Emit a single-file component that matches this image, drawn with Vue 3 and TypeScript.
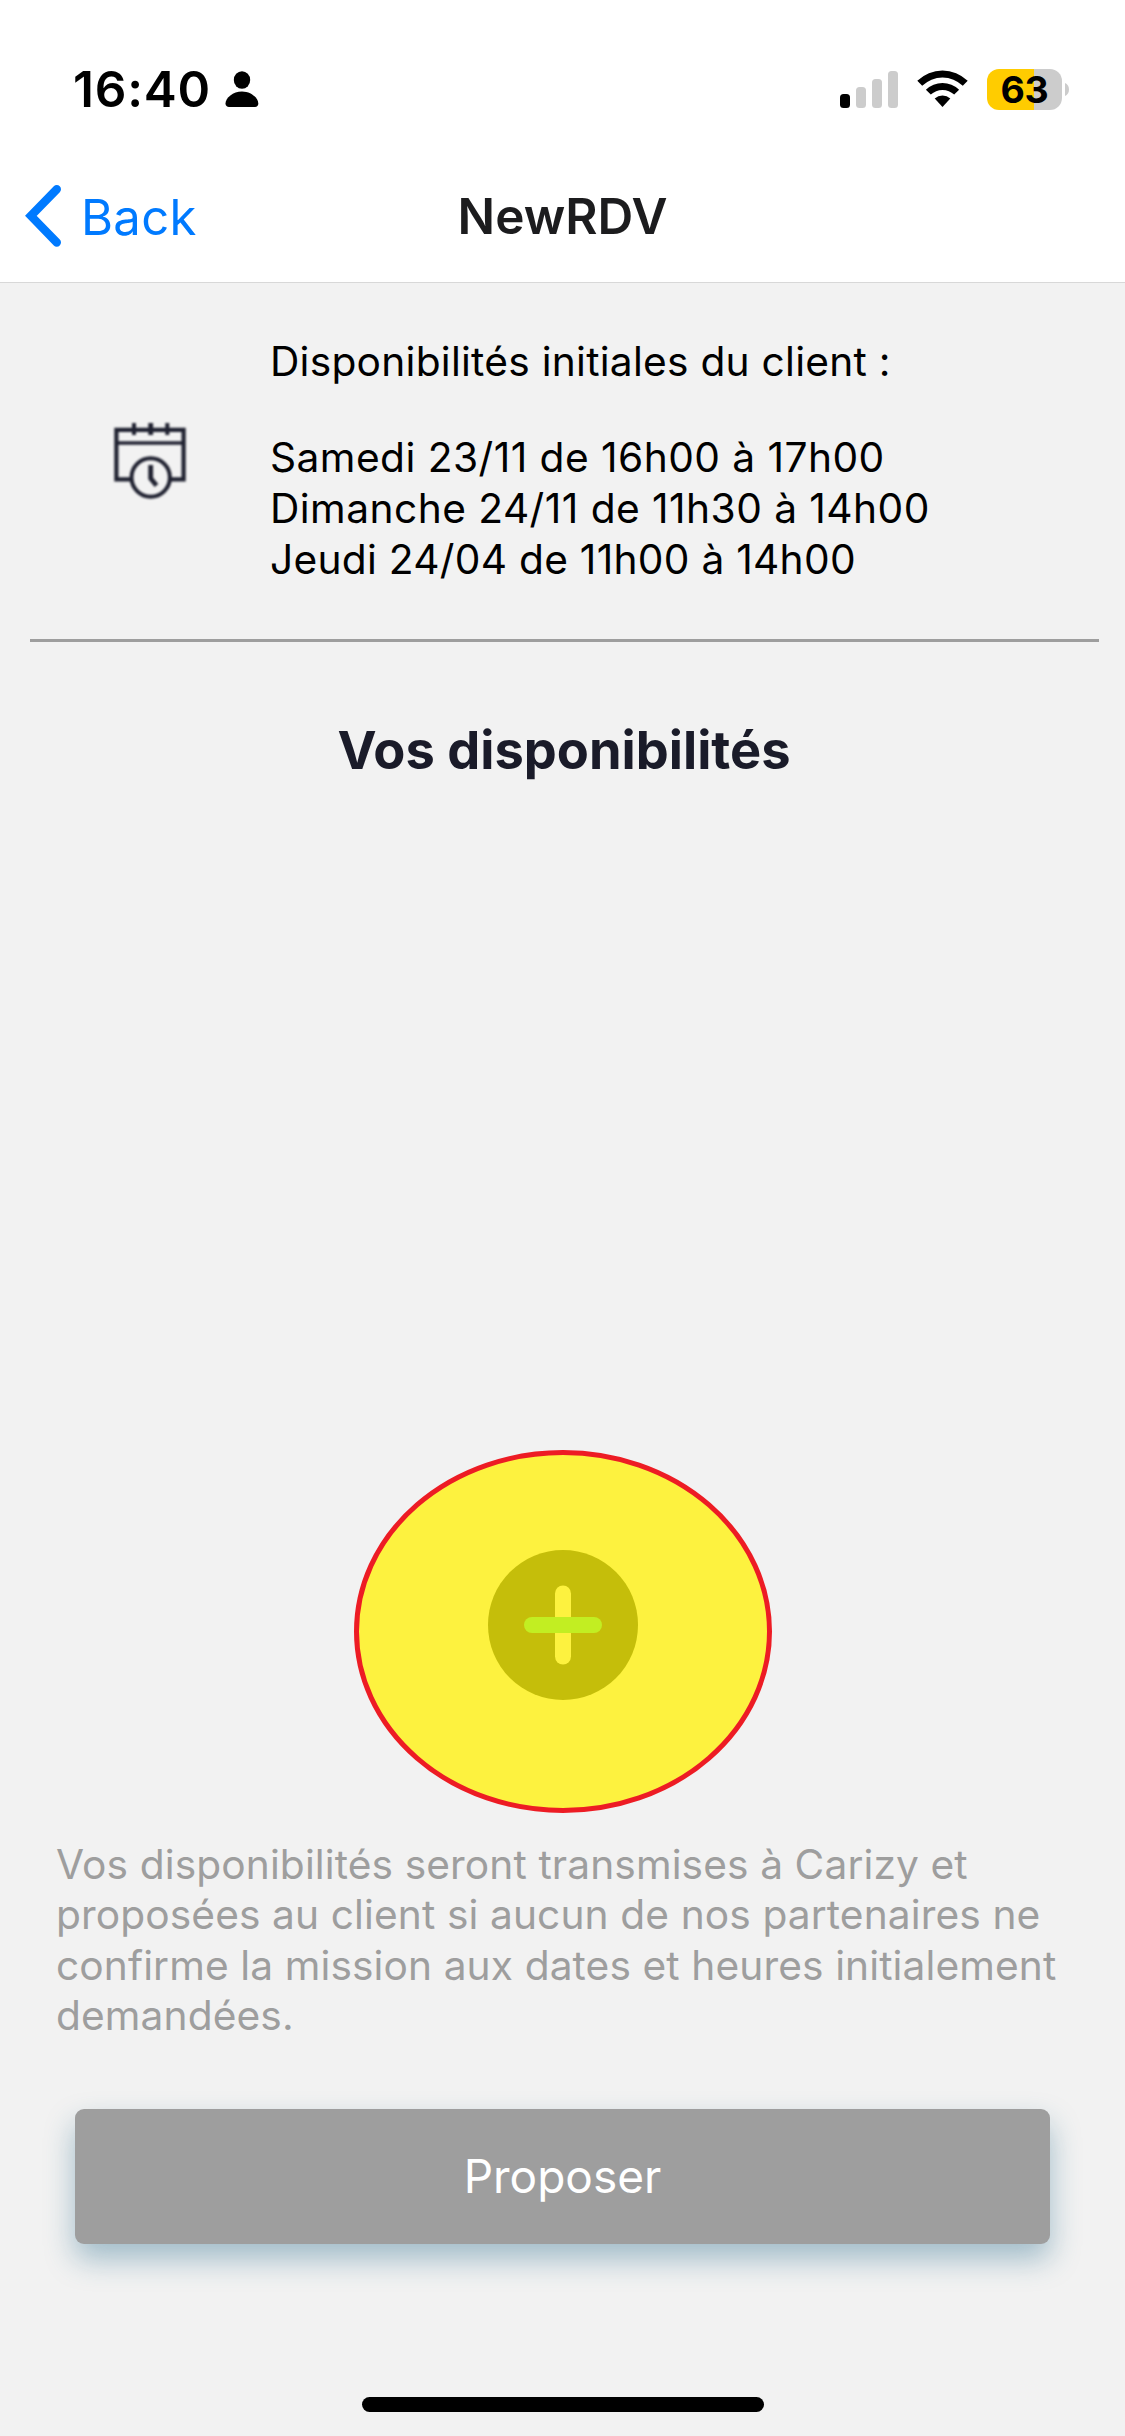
<script setup lang="ts">
interface Slot {
  label: string
  tight?: boolean
}

const slots: Slot[] = [
  { label: 'Samedi 23/11 de 16h00 à 17h00' },
  { label: 'Dimanche 24/11 de 11h30 à 14h00' },
  { label: 'Jeudi 24/04 de 11h00 à 14h00', tight: true },
]
const noteLines: string[] = [
  'Vos disponibilités seront transmises à Carizy et',
  'proposées au client si aucun de nos partenaires ne',
  'confirme la mission aux dates et heures initialement',
  'demandées.',
]
const bars: number[] = [14, 21, 29, 37]
</script>

<template>
  <main class="screen">
    <header class="header">
      <div class="status">
        <div class="status-left">
          <span class="time">16:40</span>
          <svg class="person" width="34" height="36" viewBox="0 0 34 36">
            <ellipse cx="17" cy="9" rx="8.2" ry="8.8" />
            <path d="M17 20.5C26 20.5 33.3 27 33.3 32.6C33.3 35 32 36 30 36H4C2 36 .5 35 .5 32.6C.5 27 8 20.5 17 20.5Z" />
          </svg>
        </div>
        <div class="status-right">
          <div class="signal">
            <i v-for="(h, i) in bars" :key="h" class="bar" :class="{ on: i === 0 }" :style="{ height: h + 'px' }" />
          </div>
          <svg class="wifi" width="51" height="38" viewBox="0 0 51 38">
            <path d="M.3 10.8A36 36 0 0 1 50.7 10.8L45.8 15.8A29 29 0 0 0 5.2 15.8Z" />
            <path d="M8.9 19.7A24 24 0 0 1 42.1 19.7L37.2 24.6A17 17 0 0 0 13.8 24.6Z" />
            <path d="M17.7 28.6A11.5 11.5 0 0 1 33.3 28.6L25.5 37Z" />
          </svg>
          <div class="battery"><span class="level">63</span></div>
          <svg class="cap" width="4" height="13" viewBox="0 0 4 13"><path d="M0 0C2.5 1 4 3.5 4 6.5S2.5 12 0 13Z" /></svg>
        </div>
      </div>
      <nav class="nav">
        <a class="back">
          <svg width="37" height="62" viewBox="0 0 37 62"><path d="M32.8 4.3L6.9 30.8L32.8 57.5" /></svg>
          <span class="back-label">Back</span>
        </a>
        <h1 class="nav-title">NewRDV</h1>
      </nav>
    </header>

    <section class="info">
      <div class="icon-col">
        <svg class="calendar" width="72" height="76" viewBox="0 0 72 76">
          <path d="M17.5 56.3H2.4V6.900H69.600V56.300H55.500" stroke-width="4.200" />
          <path d="M2 20H70" stroke-width="3.600" />
          <path d="M20 0V12M53.300 0V12" stroke-width="4" />
          <path d="M36.700 0V12" stroke-width="4.800" />
          <circle cx="36.700" cy="54.500" r="19.200" stroke-width="4" />
          <path d="M36.700 42V55.500L42.500 62.500" stroke-width="4.800" />
        </svg>
      </div>
      <div class="info-text">
        <p class="info-head">Disponibilités initiales du client :</p>
        <p v-for="s in slots" :key="s.label" class="slot" :class="{ tight: s.tight }">{{ s.label }}</p>
      </div>
    </section>
    <hr class="rule" />

    <h2 class="title">Vos disponibilités</h2>

    <svg class="add" width="418" height="363" viewBox="0 0 418 363">
      <ellipse cx="209" cy="181.500" rx="206.500" ry="179" fill="#fdf23f" stroke="#ed1c24" stroke-width="5" />
      <circle cx="209" cy="175" r="75" fill="#c5be0a" />
      <rect x="201" y="135.500" width="16" height="79" rx="8" fill="#fdf23f" />
      <rect x="170" y="167" width="78" height="16" rx="8" fill="#c2ee22" />
    </svg>

    <p class="note"><span v-for="l in noteLines" :key="l" class="note-line">{{ l }}</span></p>
    <button class="submit" type="button">Proposer</button>
    <div class="home" />
  </main>
</template>

<style>
body {
  margin: 0;
  background: #f2f2f2;
}
</style>

<style scoped>
.screen {
  width: 1125px;
  height: 2436px;
  overflow: hidden;
  display: flex;
  flex-direction: column;
  align-items: center;
  background: #f2f2f2;
  color: #000;
  font-family: Inter, "Liberation Sans", sans-serif;
}
p, h1, h2 { margin: 0; }
.header {
  width: 100%;
  box-sizing: border-box;
  height: 283px;
  background: #fff;
  border-bottom: 1px solid #d8d8d8;
}
.status {
  height: 178px;
  display: flex;
  justify-content: space-between;
  align-items: center;
  padding: 0 56px 0 73px;
}
.status-left, .status-right { display: flex; align-items: center; }
.time { font-size: 49.5px; font-weight: 600; line-height: 60px; letter-spacing: 0.8px; }
.person { margin-left: 14px; }
.signal { display: flex; align-items: flex-end; gap: 6px; height: 37px; }
.bar { width: 10px; border-radius: 3.5px; background: #ccc; }
.bar.on { background: #000; }
.wifi { margin: 0 19px; }
.battery {
  width: 75px;
  height: 41px;
  border-radius: 12px;
  display: flex;
  align-items: center;
  justify-content: center;
  background: linear-gradient(90deg, #fc0 47px, #ccc 47px);
}
.level { font-size: 37.5px; font-weight: 700; letter-spacing: -0.4px; }
.cap { margin-left: 3px; fill: #ccc; }
.nav {
  position: relative;
  height: 76px;
  display: flex;
  align-items: center;
  justify-content: center;
}
.back {
  position: absolute;
  left: 24px;
  top: 6px;
  display: flex;
  align-items: center;
  gap: 20px;
  height: 64px;
  color: #007aff;
  font-size: 49px;
  letter-spacing: 0.3px;
}
.back path { fill: none; stroke: #007aff; stroke-width: 8.4; stroke-linecap: round; stroke-linejoin: miter; }
.back-label { padding-top: 2px; }
.nav-title { font-size: 49.5px; font-weight: 600; color: #1c1c1e; }
.info {
  width: 100%;
  display: flex;
  align-items: center;
  padding: 53px 0 54px 30px;
  box-sizing: border-box;
}
.icon-col { width: 240px; display: flex; justify-content: center; }
.calendar { fill: none; stroke: #1f2130; filter: blur(0.8px); }
.info-text { font-size: 40.7px; line-height: 51px; white-space: nowrap; }
.info-head { margin-bottom: 45px; letter-spacing: 0.25px; }
.slot { letter-spacing: 0.45px; }
.slot.tight { letter-spacing: 0.27px; }
.rule {
  align-self: flex-start;
  width: 1069px;
  height: 3px;
  margin: 0 0 0 30px;
  border: 0;
  background: #9e9e9e;
  flex: none;
}
.title { margin-top: 78px; padding-left: 3px; font-size: 52.4px; line-height: 60px; font-weight: 700; color: #1a1b29; }
.add { margin: 670px 0 0 1px; flex: none; }
.note {
  width: 100%;
  height: 201px;
  margin-top: 27px;
  padding-left: 56px;
  box-sizing: border-box;
  font-size: 40.7px;
  line-height: 50.33px;
  letter-spacing: 0.1px;
  color: #9e9e9e;
  white-space: nowrap;
}
.note-line { display: block; }
.submit {
  width: 975px;
  height: 135px;
  margin-top: 68px;
  padding: 0 0 1px;
  border: 0;
  border-radius: 9px;
  background: #9e9e9e;
  color: #fff;
  font: 400 46px Inter, "Liberation Sans", sans-serif;
  box-shadow: 0 15px 30px rgba(30, 100, 135, 0.38);
  flex: none;
}
.home { width: 402px; height: 15px; margin: 153px 0 0 1px; border-radius: 8px; background: #000; flex: none; }
</style>
